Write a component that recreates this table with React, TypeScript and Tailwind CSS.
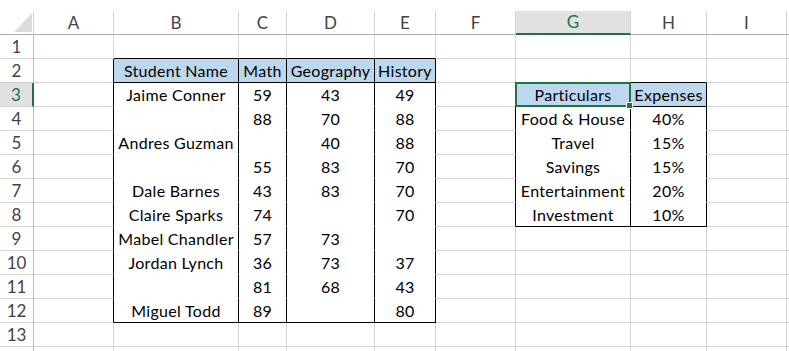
import React from 'react';

// column letters; widths live in the grid template below (each includes its right gridline)
const COLS = ['A', 'B', 'C', 'D', 'E', 'F', 'G', 'H', 'I'];

const ROWS: Record<number, string[]> = {
  2: ['', 'Student Name', 'Math', 'Geography', 'History', '', '', '', ''],
  3: ['', 'Jaime Conner', '59', '43', '49', '', 'Particulars', 'Expenses', ''],
  4: ['', '', '88', '70', '88', '', 'Food & House', '40%', ''],
  5: ['', 'Andres Guzman', '', '40', '88', '', 'Travel', '15%', ''],
  6: ['', '', '55', '83', '70', '', 'Savings', '15%', ''],
  7: ['', 'Dale Barnes', '43', '83', '70', '', 'Entertainment', '20%', ''],
  8: ['', 'Claire Sparks', '74', '', '70', '', 'Investment', '10%', ''],
  9: ['', 'Mabel Chandler', '57', '73', '', '', '', '', ''],
  10: ['', 'Jordan Lynch', '36', '73', '37', '', '', '', ''],
  11: ['', '', '81', '68', '43', '', '', '', ''],
  12: ['', 'Miguel Todd', '89', '', '80', '', '', '', ''],
};

const inScores = (r: number, c: number) => c >= 1 && c <= 4 && r >= 2 && r <= 12;
const inBudget = (r: number, c: number) => c >= 6 && c <= 7 && r >= 3 && r <= 8;

function rightBorder(r: number, c: number) {
  if (inScores(r, c) || inBudget(r, c)) return 'border-r-black';
  if (c === 0 && r >= 2 && r <= 12) return 'border-r-black';
  if (c === 5 && r >= 3 && r <= 8) return 'border-r-black';
  return 'border-r-[#d4d4d4]';
}

function bottomBorder(r: number, c: number) {
  if (c >= 1 && c <= 4 && (r === 1 || r === 2 || r === 12)) return 'border-b-black';
  if (c >= 6 && c <= 7 && (r === 2 || r === 3 || r === 8)) return 'border-b-black';
  // filled cells hide the gridlines inside the tables
  if (inScores(r, c) || inBudget(r, c)) return 'border-b-white';
  return 'border-b-[#d4d4d4]';
}

function fill(r: number, c: number) {
  if (r === 2 && c >= 1 && c <= 4) return 'bg-[#bdd7ee]';
  if (r === 3 && c >= 6 && c <= 7) return 'bg-[#bdd7ee]';
  return 'bg-white';
}

function Corner() {
  return (
    <div className="h-6 border-r border-b border-r-[#d4d4d4] border-b-[#ababab] relative">
      <svg className="absolute left-[14px] top-[2px]" width="18" height="19" viewBox="0 0 18 19">
        <polygon points="18,0 18,19 0,19" fill="#dcdcdc" />
      </svg>
    </div>
  );
}

export default function App() {
  const rowNums = Array.from({ length: 14 }, (_, i) => i + 1);

  return (
    <div className="w-[789px] h-[351px] overflow-hidden bg-white text-black font-['Lato',sans-serif]">
      <div className="h-[11px]" />
      <div className="grid grid-cols-[34px_80px_125px_48px_88px_61px_80px_115px_76px_80px_1fr]">
        {/* column headings */}
        <Corner />
        {COLS.map((col) =>
          col === 'G' ? (
            <div
              key={col}
              className="h-6 flex items-center justify-center bg-[#e1e1e1] border-r border-r-[#d4d4d4] border-b-2 border-b-[#217346] text-[17px] text-[#217346]"
            >
              {col}
            </div>
          ) : (
            <div
              key={col}
              className="h-6 flex items-center justify-center border-r border-b border-r-[#d4d4d4] border-b-[#ababab] text-[17px] text-[#444]"
            >
              {col}
            </div>
          )
        )}
        <div className="h-6 border-b border-b-[#ababab]" />

        {rowNums.map((r) => (
          <React.Fragment key={r}>
            {r === 3 ? (
              <div className="h-6 flex items-center justify-center bg-[#e1e1e1] border-r-2 border-r-[#217346] border-b border-b-[#d4d4d4] text-[17px] text-[#217346]">
                {r}
              </div>
            ) : (
              <div className="h-6 flex items-center justify-center border-r border-b border-r-[#bcbcbc] border-b-[#d4d4d4] text-[17px] text-[#444]">
                {r < 14 ? r : ''}
              </div>
            )}
            {COLS.map((_, c) => {
              const value = ROWS[r]?.[c] ?? '';
              const selected = r === 3 && c === 6;
              return (
                <div
                  key={c}
                  className={`h-6 flex items-center justify-center whitespace-nowrap border-r border-b pt-px text-[16px] tracking-[0.3px] ${rightBorder(r, c)} ${bottomBorder(r, c)} ${fill(r, c)} ${selected ? 'relative z-10' : ''}`}
                >
                  {value}
                  {selected && (
                    <div className="absolute -left-px -top-px right-[-1px] bottom-[-1px] border-2 border-[#217346]">
                      <div className="absolute right-[-4px] bottom-[-4px] w-[7px] h-[7px] bg-[#217346] border border-white" />
                    </div>
                  )}
                </div>
              );
            })}
            <div className="h-6 border-b border-b-[#d4d4d4]" />
          </React.Fragment>
        ))}
      </div>
    </div>
  );
}
